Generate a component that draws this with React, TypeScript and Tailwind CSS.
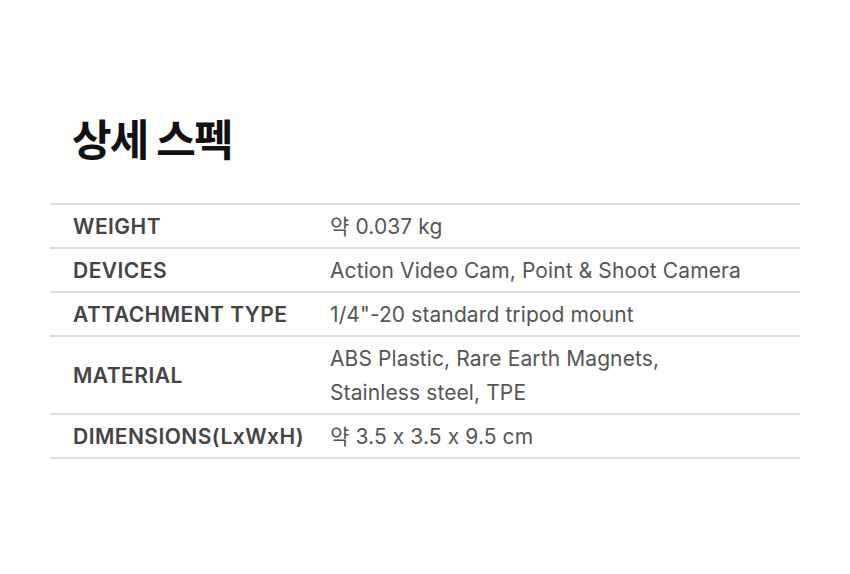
const specs: { label: string, value: string[] }[] = [
    { label: "WEIGHT", value: ["약 0.037 kg"] },
    { label: "DEVICES", value: ["Action Video Cam, Point & Shoot Camera"] },
    { label: "ATTACHMENT TYPE", value: ["1/4\"-20 standard tripod mount"] },
    { label: "MATERIAL", value: ["ABS Plastic, Rare Earth Magnets,", "Stainless steel, TPE"] },
    { label: "DIMENSIONS(LxWxH)", value: ["약 3.5 x 3.5 x 9.5 cm"] },
]

export default function App() {
    return (
        <div
            className="w-[850px] h-[574px] bg-white px-[50px] pt-[115px] [font-feature-settings:'calt'_0]"
            style={{ fontFamily: "Inter, 'Noto Sans CJK KR', sans-serif" }}
        >
            <h1 className="pl-[22px] text-[43px] leading-[50px] font-bold tracking-[-0.04em] text-[#111]">
                상세 스펙
            </h1>
            <div className="mt-[38px] w-[750px] border-t-2 border-[#ddd]">
                {specs.map((row) => (
                    <div key={row.label} className="grid grid-cols-[280px_1fr] items-center border-b-2 border-[#ddd] pt-[5px] pb-[3px] text-[21px] leading-[34px]">
                        <div className="pl-[23px] font-semibold text-[#444] tracking-[0.022em]">{row.label}</div>
                        <div className="text-[#555] tracking-[0.005em]">
                            {row.value.map((v) => (
                                <div key={v}>{v}</div>
                            ))}
                        </div>
                    </div>
                ))}
            </div>
        </div>
    )
}
